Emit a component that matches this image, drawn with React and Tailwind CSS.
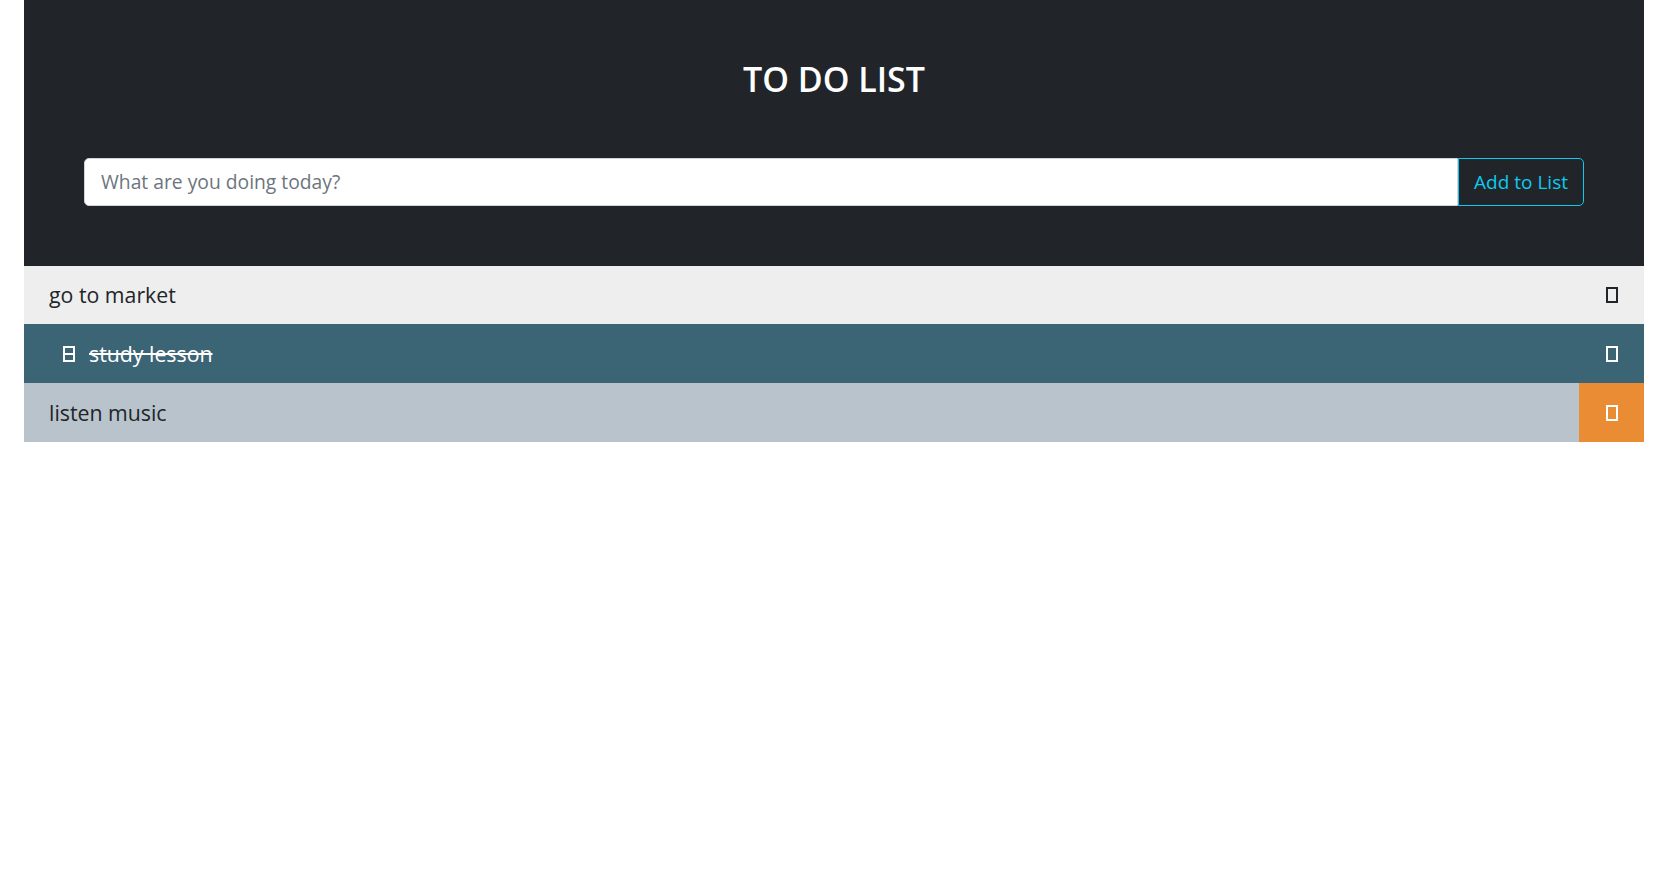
import React, { useState } from "react";

function Tofu({ color = "currentColor", strike = false }) {
  return (
    <svg width="12" height="16" viewBox="0 0 12 16" className="shrink-0">
      <rect x="1" y="1" width="10" height="14" fill="none" stroke={color} strokeWidth="2" />
      {strike && <line x1="0" y1="8" x2="12" y2="8" stroke={color} strokeWidth="2" />}
    </svg>
  );
}

const items = [
  { text: "go to market", done: false, row: "h-[58px] bg-[#eeeeee] text-[#212529]", icon: "#212529", btn: "" },
  { text: "study lesson", done: true, row: "h-[59px] bg-[#3b6475] text-white", icon: "#ffffff", btn: "" },
  { text: "listen music", done: false, row: "h-[59px] bg-[#b9c3cc] text-[#212529]", icon: "#ffffff", btn: "bg-[#e98c33]" },
];

export default function App() {
  const [input, setInput] = useState("");

  return (
    <div className="min-h-screen bg-white" style={{ fontFamily: "'Open Sans', 'Noto Sans', sans-serif" }}>
      <div className="ml-[24px] w-[1620px]">
        {/* Header */}
        <div className="bg-[#212529] px-[60px] pt-[59px] pb-[60px]">
          <h1 className="text-center text-[34px] leading-[40px] font-semibold text-white">TO DO LIST</h1>
          <form
            onSubmit={(e) => e.preventDefault()}
            className="mt-[59px] flex h-[48px]"
          >
            <input
              type="text"
              value={input}
              onChange={(e) => setInput(e.target.value)}
              placeholder="What are you doing today?"
              className="flex-1 rounded-l-[5px] border border-[#ced4da] bg-white px-[16px] text-[19.3px] text-[#212529] outline-none placeholder:text-[#6c757d]"
            />
            <button
              type="submit"
              className="rounded-r-[5px] border border-[#0dcaf0] px-[15px] text-[19px] text-[#0dcaf0]"
            >
              Add to List
            </button>
          </form>
        </div>

        {/* Items */}
        <ul>
          {items.map((item, i) => (
            <li key={i} className={`flex items-stretch ${item.row}`}>
              <div className="flex flex-1 items-center pl-[25px] text-[21.3px]">
                {item.done ? (
                  <span className="flex items-center gap-[14px] pl-[14px] line-through">
                    <Tofu color={item.icon} strike />
                    {item.text}
                  </span>
                ) : (
                  item.text
                )}
              </div>
              <button className={`flex w-[65px] items-center justify-center ${item.btn}`}>
                <Tofu color={item.icon} />
              </button>
            </li>
          ))}
        </ul>
      </div>
    </div>
  );
}
